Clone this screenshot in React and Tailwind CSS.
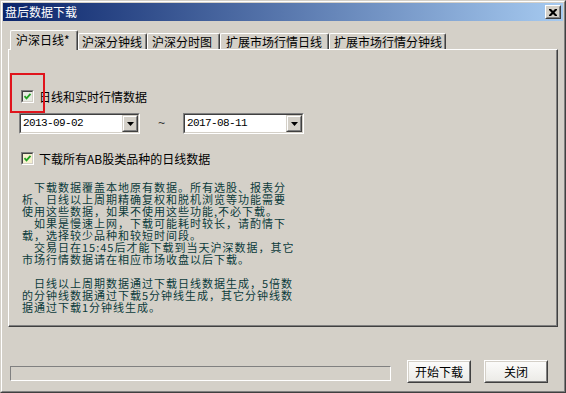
import React from "react";

function Check({ bg }) {
  return (
    <div className={`w-[13px] h-[13px] border border-t-[#808080] border-l-[#808080] border-r-white border-b-white shrink-0`}>
      <div className={`w-full h-full border border-t-[#404040] border-l-[#404040] border-r-[#d4d0c8] border-b-[#d4d0c8] ${bg} flex items-center justify-center`}>
        <svg width="9" height="9" viewBox="0 0 9 9">
          <path d="M1.5 4.2 L3.5 6.3 L7.5 1.8" stroke="#21a121" strokeWidth="1.8" fill="none" />
        </svg>
      </div>
    </div>
  );
}

function Combo({ value }) {
  return (
    <div className="w-[121px] h-[21px] border border-t-[#808080] border-l-[#808080] border-r-white border-b-white">
      <div className="w-full h-full border border-t-[#404040] border-l-[#404040] border-r-[#d4d0c8] border-b-[#d4d0c8] bg-white flex items-center">
        <span className="flex-1 pl-[2px] font-['Liberation_Mono',monospace] text-[11px] tracking-[-0.6px] text-black leading-none">{value}</span>
        <div className="w-[16px] h-[17px] bg-[#d4d0c8] border border-t-[#d4d0c8] border-l-[#d4d0c8] border-r-[#404040] border-b-[#404040]">
          <div className="w-full h-full border border-t-white border-l-white border-r-[#808080] border-b-[#808080] flex items-center justify-center">
            <svg width="7" height="4" viewBox="0 0 7 4">
              <path d="M0 0 H7 L3.5 4 Z" fill="#000" />
            </svg>
          </div>
        </div>
      </div>
    </div>
  );
}

function Btn({ children }) {
  return (
    <div className="w-[64px] h-[23px] border border-t-white border-l-white border-r-[#404040] border-b-[#404040] bg-[#d4d0c8]">
      <div className="w-full h-full border border-t-[#d4d0c8] border-l-[#d4d0c8] border-r-[#808080] border-b-[#808080] bg-[linear-gradient(#fbfbfa,#ecebe7)] flex items-center justify-center text-[12px] leading-none text-black">
        {children}
      </div>
    </div>
  );
}

function Tab({ children, className }) {
  return (
    <div className={`h-[16px] mb-px border-l border-t border-r border-l-white border-t-white border-r-[#404040] rounded-t-[2px] shadow-[inset_-1px_0_#808080] flex items-center text-[12px] leading-none text-black whitespace-nowrap ${className}`}>
      {children}
    </div>
  );
}

export default function App() {
  const lines = [
    "\u3000下载数据覆盖本地原有数据。所有选股、报表分",
    "析、日线以上周期精确复权和脱机浏览等功能需要",
    "使用这些数据，如果不使用这些功能,不必下载。",
    "\u3000如果是慢速上网，下载可能耗时较长，请酌情下",
    "载，选择较少品种和较短时间段。",
    "\u3000交易日在15:45后才能下载到当天沪深数据，其它",
    "市场行情数据请在相应市场收盘以后下载。",
    "\u00a0",
    "\u3000日线以上周期数据通过下载日线数据生成，5倍数",
    "的分钟线数据通过下载5分钟线生成，其它分钟线数",
    "据通过下载1分钟线生成。",
  ];
  return (
    <div className="w-[566px] h-[393px] bg-[#d4d0c8] border border-t-[#d4d0c8] border-l-[#d4d0c8] border-r-[#404040] border-b-[#404040] font-['Noto_Sans_CJK_SC',sans-serif] overflow-hidden">
      <div className="w-full h-full border border-t-white border-l-white border-r-[#808080] border-b-[#808080] p-px flex flex-col relative">
        {/* title bar */}
        <div className="h-[18px] bg-[linear-gradient(to_right,#0a246a,#a6caf0)] flex items-center justify-between pl-[2px] pr-[2px] shrink-0">
          <span className="text-white text-[12px] leading-none">盘后数据下载</span>
          <div className="w-[16px] h-[14px] border border-t-white border-l-white border-r-[#404040] border-b-[#404040] bg-[#d4d0c8]">
            <div className="w-full h-full border border-t-[#d4d0c8] border-l-[#d4d0c8] border-r-[#808080] border-b-[#808080] flex items-center justify-center">
              <svg width="8" height="7" viewBox="0 0 8 7">
                <path d="M0 0h2l2 2 2-2h2v1l-2.5 2.5 2.5 2.5v1h-2l-2-2-2 2h-2v-1l2.5-2.5-2.5-2.5z" fill="#000" />
              </svg>
            </div>
          </div>
        </div>

        {/* body */}
        <div className="flex flex-col pl-[5px] pt-[9px]">
          {/* tabs */}
          <div className="flex items-end h-[20px] pl-[2px] relative z-10">
            <div className="w-[68px] h-[20px] bg-[#d4d0c8] border-l border-t border-r border-l-white border-t-white border-r-[#404040] rounded-t-[2px] shadow-[inset_-1px_0_#808080] flex items-start pt-[3px] pl-[5px] text-[12px] leading-none text-black whitespace-nowrap">
              沪深日线*
            </div>
            <Tab className="w-[69px] pl-[3px]">沪深分钟线</Tab>
            <Tab className="w-[73px] pl-[4px]">沪深分时图</Tab>
            <Tab className="w-[109px] pl-[5px]">扩展市场行情日线</Tab>
            <Tab className="w-[117px] pl-[4px]">扩展市场行情分钟线</Tab>
          </div>

          {/* panel */}
          <div className="-mt-px w-[550px] h-[278px] border border-t-white border-l-white border-r-[#404040] border-b-[#404040] shadow-[inset_-1px_-1px_#808080] flex flex-col pl-[10px] pt-[40px]">
            <div className="flex items-center ml-[2px] h-[13px] gap-[5px]">
              <Check bg="bg-[#e6ebe2]" />
              <span className="text-[12px] leading-none text-black">日线和实时行情数据</span>
            </div>
            <div className="flex items-center mt-[10px]">
              <Combo value="2013-09-02" />
              <span className="w-[43px] text-center font-['Liberation_Mono',monospace] text-[12px] leading-none text-[#333]">~</span>
              <Combo value="2017-08-11" />
            </div>
            <div className="flex items-center ml-[2px] mt-[18px] h-[13px] gap-[5px]">
              <Check bg="bg-[#f6f1cf]" />
              <span className="text-[12px] leading-none text-black">下载所有AB股类品种的日线数据</span>
            </div>
            <div className="mt-[16px] ml-[3px] flex flex-col text-[11px] tracking-[1px] leading-[12px] text-[#0b3b3b]">
              {lines.map((l, i) => (
                <div key={i} className="whitespace-nowrap h-[12px]">{l}</div>
              ))}
            </div>
          </div>

          {/* bottom row */}
          <div className="flex items-start mt-[33px]">
            <div className="ml-[2px] mt-[6px] w-[381px] h-[15px] border border-t-[#808080] border-l-[#808080] border-r-white border-b-white" />
            <div className="ml-[16px]"><Btn>开始下载</Btn></div>
            <div className="ml-[13px]"><Btn>关闭</Btn></div>
          </div>
        </div>

        {/* red annotation box */}
        <div className="absolute left-[8px] top-[71px] w-[35px] h-[40px] border-2 border-[#e0141c]" />
      </div>
    </div>
  );
}
